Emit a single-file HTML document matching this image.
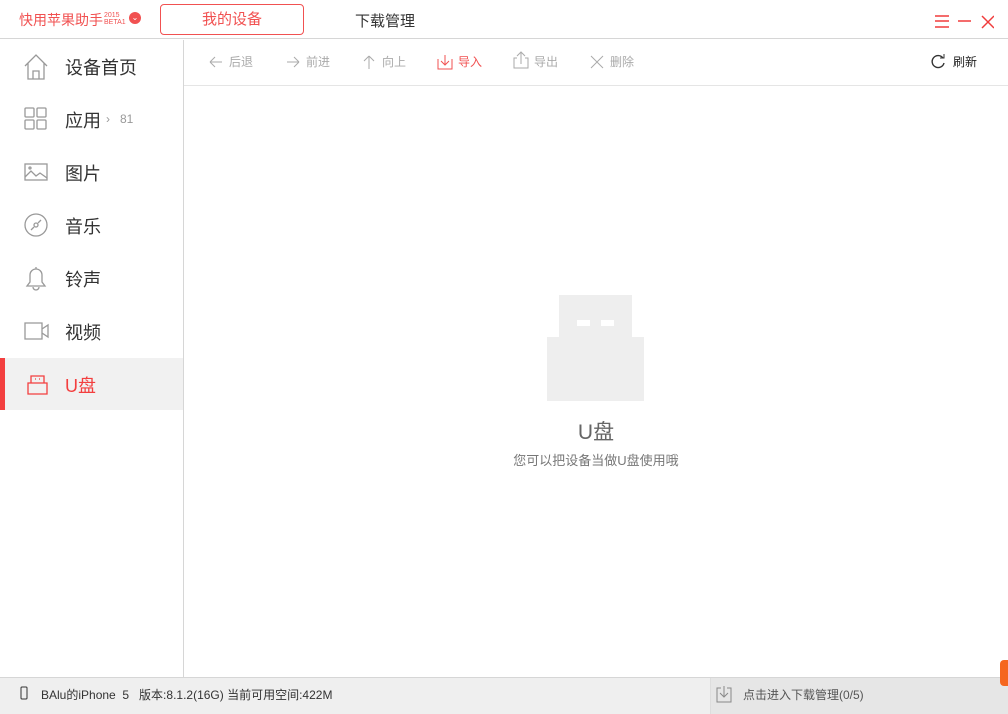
<!DOCTYPE html><html><head><meta charset="utf-8"><style>
*{margin:0;padding:0;box-sizing:border-box}
body{width:1008px;height:714px;position:relative;background:#fff;font-family:"Liberation Sans","Noto Sans CJK SC",sans-serif;overflow:hidden;color:#333}
.a{position:absolute}
.tb{font-size:12px;color:#aaa;top:54px;line-height:16px}
.tb svg{position:absolute;left:-20px;top:1px}
.it{position:absolute;left:0;width:183px;height:53px}
.it span{position:absolute;left:65px;top:14px;font-size:18px;color:#333}
.it svg{position:absolute;left:24px;top:14px}
</style></head><body>
<div class="a" style="left:0;top:0;width:1008px;height:39px;border-bottom:1px solid #d6d6d6"></div>
<div class="a" style="left:19px;top:10px;font-size:14px;color:#f15151">快用苹果助手</div>
<div class="a" style="left:104px;top:12px;font-size:7px;line-height:7px;color:#f15151">2015<br>BETA1</div>
<div class="a" style="left:129px;top:12px;width:12px;height:12px;border-radius:50%;background:#f15151;color:#fff;font-size:8px;text-align:center;line-height:12px">⌄</div>
<div class="a" style="left:160px;top:4px;width:144px;height:31px;border:1px solid #f15151;border-radius:4px;color:#f15151;font-size:15px;text-align:center;line-height:29px">我的设备</div>
<div class="a" style="left:355px;top:10px;font-size:15px;color:#333">下载管理</div>
<svg class="a" style="left:934px;top:15px" width="60" height="14"><g stroke="#f03c3c" stroke-width="1.5"><path d="M1 1h14M1 6h14M1 12h14M24 6h13M48 1l12 12M60 1l-12 12"/></g></svg>
<div class="a" style="left:183px;top:40px;width:1px;height:637px;background:#d6d6d6"></div>
<div class="a" style="left:184px;top:85px;width:824px;height:1px;background:#e5e5e5"></div>
<div class="a tb" style="left:229px">后退<svg width="14" height="12" style="top:2px"><path d="M1 6h12M1 6l5-5M1 6l5 5" stroke="#aaa" fill="none"/></svg></div>
<div class="a tb" style="left:306px">前进<svg width="14" height="12" style="top:2px"><path d="M1 6h12M13 6l-5-5M13 6l-5 5" stroke="#aaa" fill="none"/></svg></div>
<div class="a tb" style="left:382px">向上<svg width="14" height="14"><path d="M7 1v13M7 1l-5 5M7 1l5 5" stroke="#aaa" fill="none"/></svg></div>
<div class="a tb" style="left:458px;color:#f15151">导入<svg width="16" height="16" style="left:-21px;top:0"><path d="M1 5v10h14V5M8 1v10M4 7l4 4 4-4" stroke="#f15151" fill="none"/></svg></div>
<div class="a tb" style="left:534px">导出<svg width="16" height="18" style="top:-3px;left:-21px"><path d="M4 7H1v10h14V7h-3M8 13V1M4 5l4-4 4 4" stroke="#aaa" fill="none"/></svg></div>
<div class="a tb" style="left:610px">删除<svg width="14" height="14"><path d="M1 1l12 12M13 1L1 13" stroke="#aaa" fill="none"/></svg></div>
<div class="a tb" style="left:953px;color:#222;font-size:12px">刷新<svg width="16" height="16" style="left:-23px;top:0"><path d="M13 4A6 6 0 1 0 14 9" stroke="#333" fill="none" stroke-width="1.4"/><path d="M10 4h4V0" stroke="#333" fill="none"/></svg></div>
<div class="it" style="top:40px"><svg width="24" height="26"><path d="M1 12L12 1l11 11M4 9v16h16V9M9 25v-8h6v8" stroke="#999" fill="none" stroke-width="1.3"/></svg><span>设备首页</span></div>
<div class="it" style="top:93px"><svg width="24" height="24"><g stroke="#999" fill="none" stroke-width="1.3"><rect x="1" y="1" width="9" height="9" rx="1"/><rect x="13" y="1" width="9" height="9" rx="1"/><rect x="1" y="13" width="9" height="9" rx="1"/><rect x="13" y="13" width="9" height="9" rx="1"/></g></svg><span>应用</span><span style="left:106px;top:19px;font-size:12px;color:#999">›&nbsp;&nbsp;&nbsp;81</span></div>
<div class="it" style="top:146px"><svg width="24" height="24"><g stroke="#999" fill="none" stroke-width="1.3"><rect x="1" y="4" width="22" height="16"/><path d="M1 17l6-6 5 5 4-3 7 5"/><circle cx="6" cy="8" r="1"/></g></svg><span>图片</span></div>
<div class="it" style="top:199px"><svg width="24" height="24"><g stroke="#999" fill="none" stroke-width="1.3"><circle cx="12" cy="12" r="11"/><circle cx="12" cy="12" r="2"/><path d="M7 17l3-3M14 10l3-3"/></g></svg><span>音乐</span></div>
<div class="it" style="top:252px"><svg width="24" height="26"><path d="M3 20h18l-3-4V9a6 6 0 0 0-12 0v7zM12 1v2M9 21a3 3 0 0 0 6 0" stroke="#999" fill="none" stroke-width="1.3"/></svg><span>铃声</span></div>
<div class="it" style="top:305px"><svg width="26" height="24"><path d="M1 4h17v16H1zM18 10l6-4v12l-6-4" stroke="#999" fill="none" stroke-width="1.3"/></svg><span>视频</span></div>
<div class="it" style="top:358px;height:52px;background:#f1f1f1;border-left:5px solid #f33f3f"><svg width="22" height="24" style="left:22px"><path d="M4 4h13v7H4zM1 11h19v11H1zM8 7h1M12 7h1" stroke="#f33f3f" fill="none" stroke-width="1.3"/></svg><span style="left:60px;color:#f33f3f">U盘</span></div>
<div class="a" style="left:559px;top:295px;width:73px;height:43px;background:#eee"></div>
<div class="a" style="left:547px;top:337px;width:97px;height:64px;background:#eee"></div>
<div class="a" style="left:577px;top:320px;width:13px;height:6px;background:#fff"></div>
<div class="a" style="left:601px;top:320px;width:13px;height:6px;background:#fff"></div>
<div class="a" style="left:0;top:416px;width:1192px;text-align:center;font-size:21px;color:#666">U盘</div>
<div class="a" style="left:0;top:450px;width:1192px;text-align:center;font-size:13px;color:#777">您可以把设备当做U盘使用哦</div>
<div class="a" style="left:0;top:677px;width:1008px;height:37px;background:#efefef;border-top:1px solid #d6d6d6"></div>
<div class="a" style="left:710px;top:678px;width:298px;height:36px;background:#e6e6e6;border-left:1px solid #ddd"></div>
<svg class="a" style="left:20px;top:686px" width="8" height="14"><rect x="1" y="1" width="6" height="12" rx="1" stroke="#333" fill="none"/></svg>
<div class="a" style="left:41px;top:686px;font-size:12px;color:#333">BAlu的iPhone&nbsp; 5&nbsp;&nbsp; 版本:8.1.2(16G) 当前可用空间:422M</div>
<svg class="a" style="left:716px;top:685px" width="16" height="18"><path d="M5 3H1v14h14V3h-4M8 1v11M4 8l4 4 4-4" stroke="#888" fill="none"/></svg>
<div class="a" style="left:743px;top:686px;font-size:12px;color:#555">点击进入下载管理(0/5)</div>
<div class="a" style="left:1000px;top:660px;width:10px;height:26px;background:#f5661f;border-radius:4px 0 0 4px"></div>
</body></html>
